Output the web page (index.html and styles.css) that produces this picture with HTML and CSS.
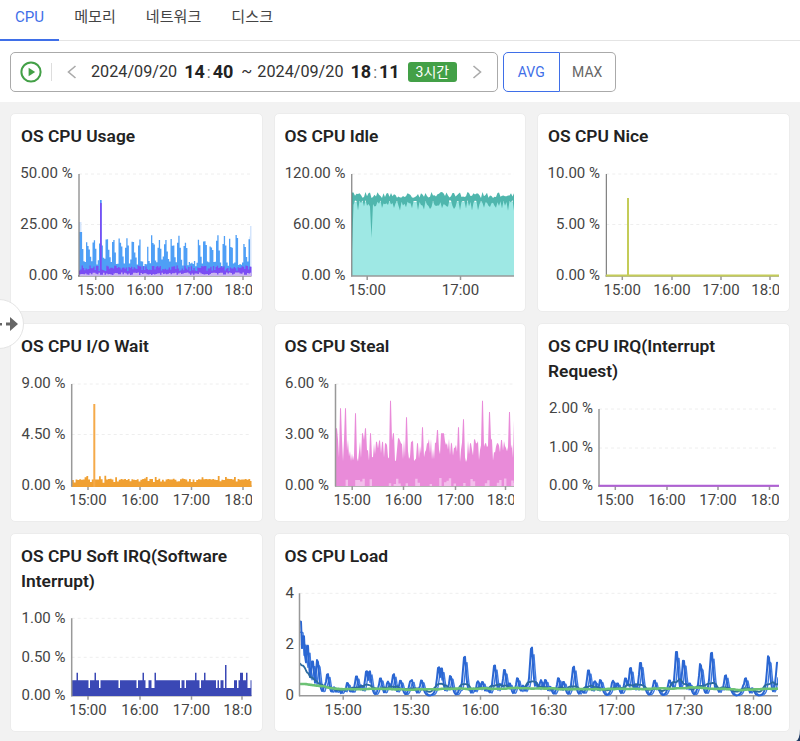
FILE: index.html
```html
<!DOCTYPE html>
<html lang="ko">
<head>
<meta charset="utf-8">
<title>CPU</title>
<link rel="stylesheet" href="styles.css">
</head>
<body>
<main class="page">
  <nav class="tabs">
    <a class="tab active">CPU</a>
    <a class="tab">메모리</a>
    <a class="tab">네트워크</a>
    <a class="tab">디스크</a>
  </nav>
  <header class="toolbar">
    <div class="range">
      <svg class="play" width="22" height="22" viewBox="0 0 22 22"><circle cx="11" cy="11" r="9.6" fill="none" stroke="#43a047" stroke-width="2"/><path d="M8.6 6.8 15.2 11 8.6 15.2Z" fill="#43a047"/></svg>
      <span class="sep"></span>
      <svg class="chev" width="10" height="14" viewBox="0 0 10 14"><path d="M8.500 1 1.500 7l7 6" fill="none" stroke="#aaa" stroke-width="1.6"/></svg>
      <span class="date first">2024/09/20</span>
      <span class="time">14<i>:</i>40</span>
      <span class="tilde">~</span>
      <span class="date">2024/09/20</span>
      <span class="time">18<i>:</i>11</span>
      <span class="badge">3시간</span>
      <svg class="chev next" width="10" height="14" viewBox="0 0 10 14"><path d="M1.500 1 8.500 7l-7 6" fill="none" stroke="#aaa" stroke-width="1.6"/></svg>
    </div>
    <div class="toggle">
      <span class="opt on">AVG</span>
      <span class="opt">MAX</span>
    </div>
  </header>
  <section class="grid">

    <article class="card">
      <h2>OS CPU Usage</h2>
      <svg class="chart" id="usage" width="240.5" height="162">
        <path class="grid-line" d="M68 25H240.5M68 75.5H240.5"/>
        <path class="axis" d="M67 127H240.5M84.7 127v4M134 127v4M183 127v4M232 127v4"/>
        <g transform="translate(-11 -149)"></g>
        <path class="axis dark" d="M68 25V127.5"/>
        <text class="y" x="61.7" y="29">50.00 %</text><text class="y" x="61.7" y="80">25.00 %</text><text class="y" x="61.7" y="131">0.00 %</text>
        <text class="x" x="84.7" y="146">15:00</text><text class="x" x="134" y="146">16:00</text><text class="x" x="183" y="146">17:00</text><text class="x" x="232" y="146">18:00</text>
      </svg>
    </article>

    <article class="card">
      <h2>OS CPU Idle</h2>
      <svg class="chart" id="idle" width="239.8" height="162">
        <path class="grid-line" d="M76.8 25H239.8M76.8 75.5H239.8"/>
        <g transform="translate(-274.5 -149)"></g>
        <path class="axis dark" d="M76.8 25V127.5"/>
        <path class="axis" d="M76 127H239.8M92.2 127v4M185.5 127v4"/>
        <text class="y" x="70.5" y="29">120.00 %</text><text class="y" x="70.5" y="80">60.00 %</text><text class="y" x="70.5" y="131">0.00 %</text>
        <text class="x" x="92.2" y="146">15:00</text><text class="x" x="185.5" y="146">17:00</text>
      </svg>
    </article>

    <article class="card">
      <h2>OS CPU Nice</h2>
      <svg class="chart" id="nice" width="241" height="162">
        <path class="grid-line" d="M68.3 25H241M68.3 75.5H241"/>
        <path class="axis dark" d="M68.3 25V127.5"/>
        <path class="axis" d="M67.5 127H241M84.3 127v4M134 127v4M183 127v4M232 127v4"/>
        <path class="trace nice" d="M68 126.6H241M90 126.6V49"/>
        <text class="y" x="62" y="29">10.00 %</text><text class="y" x="62" y="80">5.00 %</text><text class="y" x="62" y="131">0.00 %</text>
        <text class="x" x="84.3" y="146">15:00</text><text class="x" x="134" y="146">16:00</text><text class="x" x="183" y="146">17:00</text><text class="x" x="232" y="146">18:00</text>
      </svg>
    </article>

    <article class="card">
      <h2>OS CPU I/O Wait</h2>
      <svg class="chart" id="iowait" width="240.5" height="162">
        <path class="grid-line" d="M60.7 25H240.5M60.7 75.5H240.5"/>
        <path class="axis" d="M60 127H240.5M77 127v4M129 127v4M180.5 127v4M232 127v4"/>
        <g transform="translate(-11 -359)"></g>
        <path class="axis" d="M60.7 25V127.5"/>
        <text class="y" x="54.5" y="29">9.00 %</text><text class="y" x="54.5" y="80">4.50 %</text><text class="y" x="54.5" y="131">0.00 %</text>
        <text class="x" x="77" y="146">15:00</text><text class="x" x="129" y="146">16:00</text><text class="x" x="180.5" y="146">17:00</text><text class="x" x="232" y="146">18:00</text>
      </svg>
    </article>

    <article class="card">
      <h2>OS CPU Steal</h2>
      <svg class="chart" id="steal" width="239.8" height="162">
        <path class="grid-line" d="M60.5 25H239.8M60.5 75.5H239.8"/>
        <path class="axis" d="M60 127H239.8M77.2 127v4M128.5 127v4M180.5 127v4M230.5 127v4"/>
        <g transform="translate(-274.5 -359)"></g>
        <path class="axis" d="M60.5 25V127.5"/>
        <text class="y" x="54" y="29">6.00 %</text><text class="y" x="54" y="80">3.00 %</text><text class="y" x="54" y="131">0.00 %</text>
        <text class="x" x="77.2" y="146">15:00</text><text class="x" x="128.5" y="146">16:00</text><text class="x" x="180.5" y="146">17:00</text><text class="x" x="230.5" y="146">18:00</text>
      </svg>
    </article>

    <article class="card">
      <h2>OS CPU IRQ(Interrupt Request)</h2>
      <svg class="chart" id="irq" width="241" height="137">
        <path class="grid-line" d="M61 25H241M61 64H241"/>
        <path class="axis" d="M61 25V102.5"/>
        <path class="axis" d="M60 102H241M77.3 102v4M129 102v4M180 102v4M231.5 102v4"/>
        <path class="trace irq" d="M61 101.7H241"/>
        <text class="y" x="55" y="29">2.00 %</text><text class="y" x="55" y="68">1.00 %</text><text class="y" x="55" y="106">0.00 %</text>
        <text class="x" x="77.3" y="121">15:00</text><text class="x" x="129" y="121">16:00</text><text class="x" x="180" y="121">17:00</text><text class="x" x="231.5" y="121">18:00</text>
      </svg>
    </article>

    <article class="card">
      <h2>OS CPU Soft IRQ(Software Interrupt)</h2>
      <svg class="chart" id="soft" width="240.5" height="137">
        <path class="grid-line" d="M60.7 24.3H240.5M60.7 63.3H240.5"/>
        <path class="axis" d="M60 101.7H240.5M77 101.7v4M129 101.7v4M180.5 101.7v4M231 101.7v4"/>
        <g transform="translate(-11 -594)"></g>
        <path class="axis" d="M60.7 24.3V102.2"/>
        <text class="y" x="54.5" y="29">1.00 %</text><text class="y" x="54.5" y="68">0.50 %</text><text class="y" x="54.5" y="106">0.00 %</text>
        <text class="x" x="77" y="121">15:00</text><text class="x" x="129" y="121">16:00</text><text class="x" x="180.5" y="121">17:00</text><text class="x" x="231" y="121">18:00</text>
      </svg>
    </article>

    <article class="card wide">
      <h2>OS CPU Load</h2>
      <svg class="chart" id="load" width="503.2" height="162">
        <path class="grid-line" d="M24.5 24.3H503.2M24.5 75.3H503.2"/>
        <path class="axis" d="M24 126.7H503.2M68.2 126.7v4M136.2 126.7v4M205.5 126.7v4M273.5 126.7v4M341.5 126.7v4M409.5 126.7v4M478.5 126.7v4"/>
        <g transform="translate(-274.5 -569)"></g>
        <path class="axis" d="M24.5 24.3V127.2"/>
        <text class="y" x="19" y="29">4</text><text class="y" x="19" y="80">2</text><text class="y" x="19" y="131">0</text>
        <text class="x" x="68.2" y="146">15:00</text><text class="x" x="136.2" y="146">15:30</text><text class="x" x="205.5" y="146">16:00</text><text class="x" x="273.5" y="146">16:30</text><text class="x" x="341.5" y="146">17:00</text><text class="x" x="409.5" y="146">17:30</text><text class="x" x="478.5" y="146">18:00</text>
      </svg>
    </article>
  </section>

  <button class="drawer" type="button" aria-label="펼치기">
    <svg width="20" height="14" viewBox="0 0 20 14"><path d="M0 6h2v2.500H0zM6 5.500h4V0l8 7-8 7V8.500H6z" fill="#666"/></svg>
  </button>
</main>
<script src="charts.js"></script>
</body>
</html>
```

FILE: styles.css
```css
* { box-sizing: border-box; }
html, body { margin: 0; height: 100%; }
body {
  background: #1f3a63;
  font-family: Roboto, "Noto Sans CJK KR", sans-serif;
  color: #333;
  overflow: hidden;
}
.page {
  position: relative;
  width: 800px;
  height: 741px;
  background: #f2f2f2;
  border-bottom-right-radius: 4px 12px;
  overflow: hidden;
}
.tabs {
  display: flex;
  height: 41px;
  background: #fff;
  border-bottom: 1px solid #e4e4e4;
}
.tab {
  padding: 0 15px;
  height: 41px;
  line-height: 35px;
  font-size: 15.100px;
  color: #444;
}
.tab.active {
  color: #3f6fe8;
  border-bottom: 2px solid #3f6fe8;
}
.toolbar {
  display: flex;
  gap: 5.500px;
  height: 60.500px;
  padding: 10.500px 10px 0;
  background: #fff;
}
.range {
  display: flex;
  align-items: center;
  width: 487.500px;
  height: 40px;
  padding-left: 9px;
  border: 1px solid #aaa;
  border-radius: 5px;
  font-size: 16.200px;
  color: #333;
}
.sep { width: 1px; height: 18px; margin: 0 15px 0 9px; background: #ddd; }
.chev { flex: none; }
.chev.next { margin-left: 15px; }
.date.first { margin-left: 14px; }
.time { margin: 0 6px 0 7px; font-size: 18px; font-weight: 700; color: #222; }
.time i { margin: 0 2px; font-style: normal; font-weight: 400; font-size: 16px; color: #666; }
.tilde { margin: 0 5px 0 2px; }
.badge {
  margin-left: 2px;
  width: 49.500px;
  height: 20px;
  line-height: 20px;
  text-align: center;
  border-radius: 3px;
  background: #43a047;
  color: #fff;
  font-size: 14px;
}
.toggle { display: flex; height: 40px; }
.opt {
  width: 56.500px;
  line-height: 38px;
  text-align: center;
  font-size: 14px;
  color: #666;
  border: 1px solid #aaa;
  border-radius: 0 5px 5px 0;
  border-left: 0;
}
.opt.on {
  width: 56.500px;
  color: #3f6fe8;
  border: 1px solid #3f6fe8;
  border-radius: 5px 0 0 5px;
}
.grid {
  display: grid;
  grid-template-columns: repeat(3, 252.500px);
  grid-template-rows: repeat(3, 199px);
  gap: 11px;
  padding: 11.500px 10.500px 0 10px;
}
.card {
  display: flex;
  flex-direction: column;
  background: #fff;
  border: 1px solid #ececec;
  border-radius: 5px;
  overflow: hidden;
}
.card.wide { grid-column: span 2; }
.card h2 {
  margin: 0;
  padding: 10px 10px 0;
  font-size: 17.400px;
  line-height: 25px;
  font-weight: 600;
  color: #222;
}
.chart { display: block; flex: none; overflow: hidden; }
.chart text { font-size: 15px; fill: #444; }
.chart .y { text-anchor: end; }
.chart .x { text-anchor: middle; }
.grid-line { fill: none; stroke: #eee; stroke-width: 1; stroke-dasharray: 3 3; }
.axis { fill: none; stroke: #999; stroke-width: 1.500; }
.axis.dark { stroke: #666; stroke-width: 1; }
.trace { fill: none; stroke-width: 2; }
.trace.nice { stroke: #c4cc58; }
.trace.irq { stroke: #b05fd6; }
.drawer {
  position: absolute;
  left: -26px;
  top: 299px;
  width: 50px;
  height: 50px;
  padding: 0 0 0 25px;
  display: flex;
  align-items: center;
  border-radius: 50%;
  border: 1px solid #e4e4e4;
  background: #fff;
}
```

FILE: charts.js
```js
// Seeded sample series for the eight charts (drawn in page coordinates).
function rng(seed) {
  return function () {
    seed = (seed + 0x6d2b79f5) | 0;
    var t = Math.imul(seed ^ (seed >>> 15), 1 | seed);
    t = (t + Math.imul(t ^ (t >>> 7), 61 | t)) ^ t;
    return ((t ^ (t >>> 14)) >>> 0) / 4294967296;
  };
}
var NS = 'http://www.w3.org/2000/svg';
function add(id, d, fill, stroke, width) {
  var p = document.createElementNS(NS, 'path');
  p.setAttribute('d', d);
  p.setAttribute('fill', fill || 'none');
  if (stroke) {
    p.setAttribute('stroke', stroke);
    p.setAttribute('stroke-width', width || 1);
    p.setAttribute('stroke-linejoin', 'round');
  }
  document.querySelector('#' + id + ' g').appendChild(p);
}
function f(n) { return n.toFixed(1); }
function line(pts) { return pts.map(function (p, i) { return (i ? 'L' : 'M') + f(p[0]) + ' ' + f(p[1]); }).join(''); }
function area(pts, base) {
  return line(pts) + 'L' + f(pts[pts.length - 1][0]) + ' ' + base + 'L' + f(pts[0][0]) + ' ' + base + 'Z';
}
function sample(x0, x1, dx, fn) {
  var out = [];
  for (var x = x0, i = 0; x <= x1 + dx; x += dx, i++) out.push([Math.min(x, x1), fn(x, i)]);
  return out;
}
function steps(pts) {
  var out = [];
  pts.forEach(function (p, i) {
    if (i) out.push([p[0], pts[i - 1][1]]);
    out.push(p);
  });
  return out;
}

// OS CPU Usage
(function () {
  var r = rng(11), b = 276;
  add('usage', 'M79 222h2.500V276H79ZM250 226h1.500V276H250Z', '#d4e5fc');
  var blue = steps(sample(79.500, 250, 1.300, function (x, i) {
    if ((x > 140 && x < 146) || (x > 190 && x < 197) || (x > 237 && x < 243)) return 261 + r() * 6;
    if (x < 82) return 232;
    var k = i % 5;
    if (k === 0 || k === 1) return 234 + r() * 14;
    if (k === 2) return 244 + r() * 10;
    return 256 + r() * 10;
  }));
  add('usage', area(blue, b), '#4f9ff6');
  add('usage', 'M100 200h1.700V276H100Z', '#4f9ff6');
  var purple = steps(sample(79, 251.500, 1.300, function () { return 265.500 + r() * 5.500; }));
  add('usage', area(purple, b), '#7a4df4');
  add('usage', 'M100 203h1.700V276H100Z', '#7a4df4');
  var lav = steps(sample(79, 251.500, 1.500, function () { return 272.500 + r() * 2.500; }));
  add('usage', area(lav, b), '#c9b4ef');
})();

// OS CPU Idle
(function () {
  var r = rng(23), b = 276, x0 = 351.500, x1 = 514.300;
  add('idle', 'M' + x0 + ' 202H' + x1 + 'V276H' + x0 + 'Z', '#9ee8e4');
  var top = sample(x0, x1, 1.500, function () { return 192 + r() * 6; });
  var low = sample(x0, x1, 1.500, function (x, i) {
    if (x < 352.500) return 250;
    if (x > 370 && x < 372.500) return 238;
    return i % 4 === 0 ? 205 + r() * 6 : 200 + r() * 7;
  });
  add('idle', line(top) + low.reverse().map(function (p) { return 'L' + f(p[0]) + ' ' + f(p[1]); }).join('') + 'Z', '#4fb6ad');
})();

// OS CPU I/O Wait
(function () {
  var r = rng(37), b = 487;
  var pts = steps(sample(72, 251.500, 1.800, function () {
    var v = r();
    return v > 0.88 ? 475.500 + r() * 2 : v < 0.15 ? 481 + r() * 2 : 478.500 + r() * 1.500;
  }));
  add('iowait', area(pts, b), '#f0a032');
  add('iowait', 'M93.300 404h2V487h-2Z', '#f5aa4a');
})();

// OS CPU Steal
(function () {
  var r = rng(53), b = 486;
  var peaks = [[198,325],[210,265],[225,265],[255,280],[275,340],[285,325],[300,340],[318,365],[345,370],[360,242],[370,340],[385,355],[407,292],[423,365],[440,370],[455,322],[470,370],[500,330],[512,340],[520,340],[565,322],[578,298],[600,370],[618,370],[637,242],[657,276],[680,370],[693,360],[717,276],[733,300]]
    .map(function (p) { return [270 + p[0] / 3, 320 + p[1] / 3]; });
  var mask = sample(335.500, 514.300, 1, function (x) {
    for (var i = 0; i < peaks.length; i++) if (Math.abs(x - peaks[i][0]) < 1) return peaks[i][1];
    return 438 + r() * 24;
  });
  add('steal', area(mask, b), '#e98bd9');
  var lo = steps(sample(335.500, 514.300, 2.400, function () { return r() > 0.5 ? 478 + r() * 6 : 486; }));
  add('steal', area(lo, b), '#f4bdec');
})();

// OS CPU Soft IRQ
(function () {
  var r = rng(71), b = 696;
  var spikes = [230, 283, 427, 462, 585, 612, 722, 737].map(function (z) { return z / 3; });
  var pts = steps(sample(72, 251.500, 1.500, function (x) {
    for (var i = 0; i < spikes.length; i++) if (Math.abs(x - spikes[i]) < 0.9) return 672.700;
    if (Math.abs(x - 225.500) < 0.9) return 665;
    if (x > 145 && x < 158 && r() > 0.4) return 688;
    if (x > 223 && x < 233) return 688;
    return r() > 0.86 ? 688 : 680.300;
  }));
  add('soft', area(pts, b), '#3a48b5');
})();

// OS CPU Load
(function () {
  var r = rng(97), b = 695.700;
  var peaks = [[300,621],[303,633],[307,645],[312,660],[317,660],[327,674],[343,690],[356,676],[366,671],[369,671],[380,678],[393,674],[400,680],[411,680],[421,680],[438,667],[441,668],[450,676],[464,656],[482,686],[494,665],[504,669],[517,678],[531,646],[545,680],[558,678],[573,666],[588,669],[600,680],[613,682],[625,678],[630,667],[640,662],[654,680],[669,680],[676,651],[683,660],[700,664],[711,651],[725,675],[745,678],[768,656],[777,662]];
  for (var px = 320; px < 778; px += 4.500) {
    if (r() > 0.45) peaks.push([px, b - (5 + r() * 11)]);
  }
  function level(x) {
    var h = 0;
    peaks.forEach(function (p) {
      var d = Math.max(0, Math.abs(x - p[0]) - 0.8);
      var v = (b - p[1]) * Math.exp(-d / 1.700);
      if (v > h) h = v;
    });
    return h;
  }
  var raw = [];
  for (var x = 299.500; x <= 778; x += 1) {
    raw.push([x, level(x) * (0.94 + r() * 0.06)]);
  }
  function avg(win, scale, base) {
    return raw.map(function (p, i) {
      var s = 0, n = 0;
      for (var j = Math.max(0, i - win); j <= Math.min(raw.length - 1, i + win); j++) { s += raw[j][1]; n++; }
      return [p[0], b - (base + scale * s / n)];
    });
  }
  var second = raw.map(function (p, i) { var q = raw[Math.max(0, i - 2)]; return [p[0], b - q[1] * 0.85]; });
  add('load', line(second), null, '#3f7ae0', 1.400);
  add('load', line(raw.map(function (p) { return [p[0], b - p[1]]; })), null, '#2a66d2', 2);
  add('load', line(avg(5, 0.5, 3)), null, '#2b6a9e', 1.800);
  add('load', line(avg(24, 0.26, 4).map(function (p) { return [p[0], Math.max(p[1], 684)]; })), null, '#6cc274', 2.600);
})();
```
